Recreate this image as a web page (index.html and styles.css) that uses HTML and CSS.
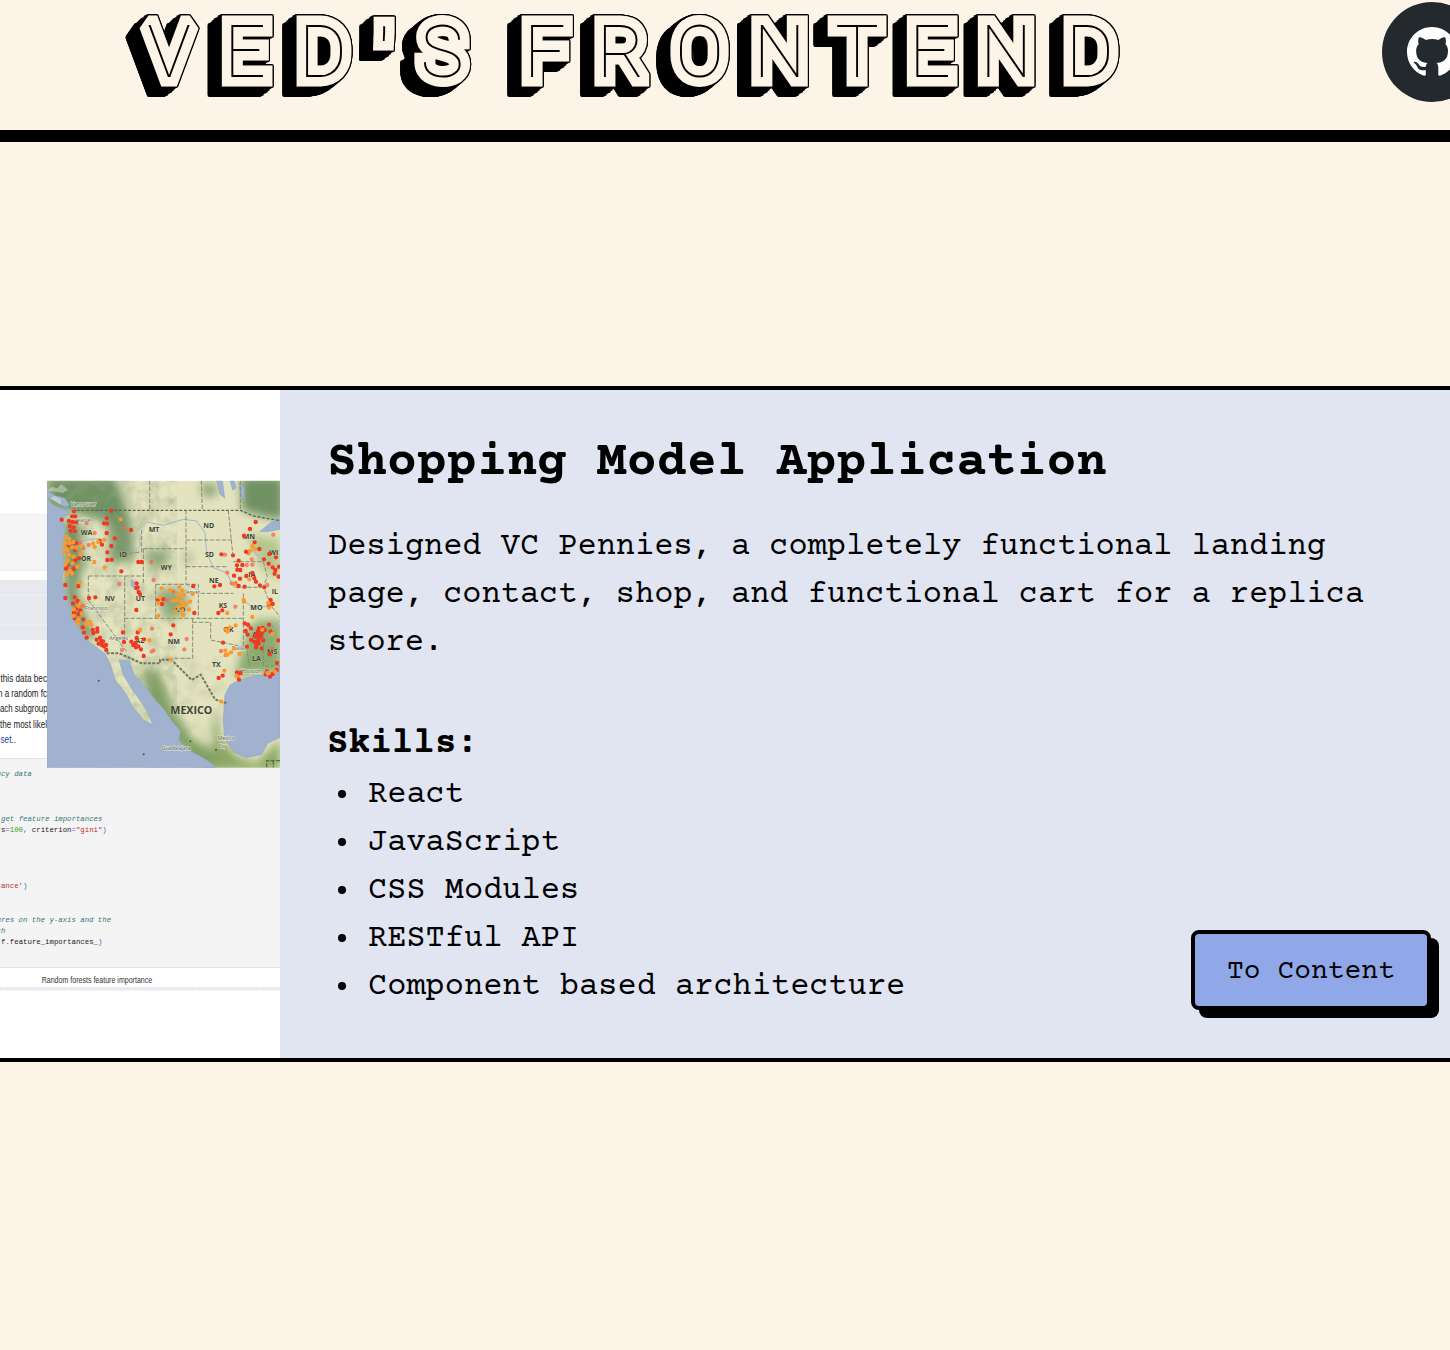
FILE: index.html
```html
<!DOCTYPE html>
<html lang="en">
<head>
<meta charset="utf-8">
<title>Ved's Frontend</title>
<link rel="stylesheet" href="styles.css">
</head>
<body>
<header class="header">
  <h1 class="brand"><svg viewBox="0 0 1382 130"><text y="77 77 77 80.500 77 77 77" x="169 245 323 384 442 490 545 621 699.500 779.500 857 930 1006 1090">VED'S FRONTEND</text></svg></h1>
  <a class="github" aria-label="GitHub"><svg viewBox="0 0 16 16"><path d="M8 0C3.58 0 0 3.58 0 8c0 3.54 2.29 6.53 5.47 7.59.4.07.55-.17.55-.38 0-.19-.01-.82-.01-1.49-2.01.37-2.53-.49-2.69-.94-.09-.23-.48-.94-.82-1.13-.28-.15-.68-.52-.01-.53.63-.01 1.08.58 1.23.82.72 1.21 1.87.87 2.33.66.07-.52.28-.87.51-1.07-1.78-.2-3.64-.89-3.64-3.95 0-.87.31-1.59.82-2.15-.08-.2-.36-1.02.08-2.12 0 0 .67-.21 2.2.82.64-.18 1.32-.27 2-.27s1.36.09 2 .27c1.53-1.04 2.2-.82 2.2-.82.44 1.1.16 1.92.08 2.12.51.56.82 1.27.82 2.15 0 3.07-1.87 3.75-3.65 3.95.29.25.54.73.54 1.48 0 1.07-.01 1.93-.01 2.2 0 .21.15.46.55.38A8.01 8.01 0 0 0 16 8c0-4.42-3.58-8-8-8z"/></svg></a>
</header>
<main>
<section class="project">
  <svg class="preview" viewBox="0 390 280 668">
    <defs>
      <clipPath id="map"><path d="M141 32H840V893H141z"/></clipPath>
      <filter id="soft" x="-30%" y="-30%" width="160%" height="160%"><feGaussianBlur stdDeviation="14"/></filter>
      <filter id="relief" x="0" y="0" width="100%" height="100%"><feTurbulence type="fractalNoise" baseFrequency=".025" numOctaves="4" seed="4"/><feColorMatrix values="0 0 0 0 .3  0 0 0 0 .38  0 0 0 0 .22  1.6 0 0 0 -.6"/></filter>
    </defs>
    <path d="M0 390H280V1058H0z" fill="#fff"/>
    <path d="M-1 514.500H48V570.500H-1z" fill="#f5f5f5" stroke="#e8e8e8" stroke-width=".7"/>
    <path d="M0 580H48V640H0z" fill="#e8e9ef"/><path d="M0 595H48M0 625H48" stroke="#f1f1f5"/>
    <path d="M-1 758.500H281V967.500H-1z" fill="#f4f4f4" stroke="#dedede" stroke-width=".8"/>
    <path d="M0 987H280V990.500H0z" fill="#eaeaf1"/>
    <path d="M3.500 987v4M68 987v4M132 987v4M197 987v4M261 987v4" stroke="#fff" stroke-width=".6"/>
    <g class="article">
      <text x="0.500" y="681.500" textLength="46.500" lengthAdjust="spacingAndGlyphs">this data bec</text><text x="-2" y="697" textLength="49" lengthAdjust="spacingAndGlyphs">n a random fc</text><text x="0" y="712.300" textLength="47.500" lengthAdjust="spacingAndGlyphs">ach subgroup</text><text x="0" y="727.500" textLength="47" lengthAdjust="spacingAndGlyphs">the most likel</text><text x="0.500" y="743" textLength="15.500" lengthAdjust="spacingAndGlyphs" class="link">set..</text>
    </g>
    <g class="code">
      <g class="comment"><text x="-3.500" y="776.200">ncy data</text><text x="1" y="821.200">get feature importances</text><text x="-3.500" y="921.500">ures on the y-axis and the</text><text x="-3.500" y="932.700">ch</text></g>
      <text x="-3.500" y="832.200">rs<tspan fill="#b32bff">=</tspan><tspan fill="#339b26">100</tspan><tspan fill="#315ec6">,</tspan> criterion<tspan fill="#b32bff">=</tspan><tspan fill="#bf3030">"gini"</tspan><tspan fill="#315ec6">)</tspan></text>
      <text x="-3.500" y="888.200" fill="#bf3030">tance'<tspan fill="#315ec6">)</tspan></text>
      <text x="1" y="944.200">f<tspan fill="#b32bff">.</tspan>feature_importances_<tspan fill="#315ec6">)</tspan></text>
    </g>
    <text class="caption" x="41.700" y="983" textLength="110.500" lengthAdjust="spacingAndGlyphs">Random forests feature importance</text>

    <g transform="translate(0 470) scale(.33333)" clip-path="url(#map)">
      <path d="M141 32H840V893H141z" fill="#e4e3bf"/>
      <g filter="url(#soft)" fill="#6f9263">
        <path d="M141 20H345L385 130 400 200 365 260 340 200 310 150 230 130 141 110z"/>
        <path d="M190 150l50 10 10 120-20 80 30 90 30 60-40-10-50-110z"/>
        <path d="M722 20H850V150L790 140 725 120z"/>
        <path d="M745 480l30-30 70 0v160h-60l-80 10z" fill="#8bab70"/>
        <path d="M740 190l100 20v120l-60-40z" fill="#b5c58b"/>
        <path d="M600 40h50v40h-40zM555 250h18v30h-18zM435 240h70v50h-50zM470 360h90v70l-60 20z" fill="#8ea777"/>
        <path d="M430 590l50 20 40 110 60 90 80 40 60 30v20H600l-80-90-80-110z" fill="#7fa060"/>
        <path d="M640 710l20 90 50 60 60 20 70-70v90H640z" fill="#8aa762"/>
        <path d="M330 130l70 70 0 70-70 10z" fill="#79976b"/>
      </g>
      <path d="M141 32H530V893H141z" filter="url(#relief)" opacity=".6"/>
      <path d="M400 560H680V893H400z" filter="url(#relief)" opacity=".3"/>
      <g fill="#a0b2cd" stroke="#8aa9c9" stroke-width="2">
        <path d="M141 90L165 108 195 120 210 118 207 132 188 142 194 190 188 250 193 285 184 335 203 383 214 430 238 475 260 510 315 552 332 585 345 630 380 675 398 710 430 750 458 764 448 735 424 696 399 662 370 615 358 570 388 573 402 614 438 652 470 695 490 715 517 755 541 782 536 812 570 842 620 870 650 893H141z"/>
        <path d="M840 592L805 614 760 618 720 630 690 645 675 675 670 750 674 805 700 845 740 863 785 853 803 820 840 802z"/>
        <path d="M141 62l25 15 28 7 14 20-10 8-26-14-31-18z"/>
        <path d="M840 148L815 156 780 184 800 185 840 178zM650 32l10 40 14 12-7-52zM690 32l8 28 10-6-6-22zM718 40l5 35 12 20-3-45zM394 330l12 8-2 20-10-12z"/>
      </g>
      <g fill="none" stroke="#9db5d5" stroke-width="3"><path d="M235 214l55-8 35 4M415 180l25-24 50 10 60-18 40 5 25 35 5 60 20 45 40 15 22 45M400 250l20-20 0-40M732 390l20 18 45 2M764 200l-10 40 40 35M560 345l35 15M805 500l35-50"/></g>
      <path d="M141 62l15-12 16 5 12-13 20 18-15 8zM150 85l15-8 18 11 0 17z" fill="#e5e8df" opacity=".45"/>
      <path d="M230 121H722L760 138 840 152" fill="none" stroke="#5c6651" stroke-width="4" stroke-dasharray="9 5"/>
      <path d="M449 32V121M604 32L607 121M721 32V121M558 121V343M558 210H695M685 121L698 250M430 236H558M430 236V343M558 290H680M265 318H430M265 318V390L380 545M374 318V520M467 343V445M467 343H595V370H700M595 370V445M373 445H730M578 445V565H514M578 457H632V510L730 530M730 370V530M700 275H790L802 320 790 350 815 410 840 440M706 352H790M740 530l8 60M790 520v68h50M425 180v65l-50 8" fill="none" stroke="#858d71" stroke-width="3" stroke-dasharray="13 5"/>
      <path d="M320 550H358L425 580H480V569H514L575 630 602 614 645 688 683 701" fill="none" stroke="#737865" stroke-width="6" stroke-dasharray="9 4"/>
      <path d="M840 872H800V893M820 872v20" fill="none" stroke="#56704a" stroke-width="4" stroke-dasharray="12 4"/>
      <g class="state"><text x="242" y="194">WA</text><text x="243" y="273">OR</text><text x="358" y="261">ID</text><text x="446" y="187">MT</text><text x="610" y="175">ND</text><text x="615" y="260">SD</text><text x="482" y="299">WY</text><text x="627" y="338">NE</text><text x="314" y="394">NV</text><text x="407" y="394">UT</text><text x="526" y="426">CO</text><text x="656" y="415">KS</text><text x="751" y="419">MO</text><text x="728" y="206">MN</text><text x="808" y="254">WI</text><text x="745" y="322">IA</text><text x="815" y="373">IL</text><text x="503" y="521">NM</text><text x="406" y="518">AZ</text><text x="670" y="487">OK</text><text x="757" y="500">AR</text><text x="636" y="592">TX</text><text x="756" y="572">LA</text><text x="801" y="553">MS</text><text x="511" y="733" class="country" textLength="126" lengthAdjust="spacingAndGlyphs">MEXICO</text></g>
      <g class="city"><text x="212" y="108">Vancouver</text><text x="231" y="156">eattle</text><text x="255" y="421">Francisco</text><text x="328" y="510">Angeles</text><text x="549" y="371">Denver</text><text x="696" y="541">Dallas</text><text x="722" y="610">Houston</text><text x="485" y="839">Guadalajara</text><text x="653" y="810">Mexico</text><text x="653" y="835">City</text></g>
      <g class="heat pale"><path d="M260 160h0M284 189h0M373 174h0M240 218h0M250 234h0M266 225h0M358 342h0M461 330h0M454 276h0M250 408h0M366 540h0M455 545h0M460 541h0M560 507h0M553 538h0M456 476h0M706 410h0M682 308h0M695 340h0M675 254h0M745 250h0M755 268h0M757 284h0M740 285h0M820 194h0M802 345h0M663 543h0M677 555h0M816 535h0M748 470h0M499 390h0M520 365h0"/></g>
      <g class="heat red">
        <path d="M222 124h0M216 139h0M226 139h0M207 153h0M218 156h0M229 157h0M209 168h0M221 172h0M212 182h0M225 184h0M185 149h0M334 122h0M320 145h0M312 160h0M321 161h0M320 189h0M344 205h0M299 213h0M306 224h0M322 247h0M334 228h0M335 269h0M322 270h0M364 304h0M228 219h0M207 226h0M225 241h0M226 271h0M237 265h0M203 286h0M198 296h0M222 296h0M196 345h0M235 348h0M196 384h0M267 384h0M286 382h0M224 382h0M233 393h0M219 401h0M237 406h0M228 416h0M241 421h0M222 428h0M235 432h0M250 448h0M248 472h0M234 458h0M224 445h0"/>
        <path d="M252 488h0M260 503h0M278 480h0M292 475h0M280 489h0M292 485h0M290 509h0M300 503h0M309 514h0M296 521h0M313 529h0M319 540h0M306 525h0M372 516h0M394 515h0M407 519h0M415 529h0M423 538h0M431 558h0M369 487h0M413 487h0M432 508h0M410 504h0M400 525h0M408 532h0M304 513h0M318 525h0M512 493h0M520 466h0M410 340h0M413 352h0M416 366h0M409 354h0M420 373h0M409 420h0M415 276h0M425 276h0M393 180h0M473 391h0M486 402h0M489 387h0M580 348h0M583 429h0M655 429h0M667 421h0M643 349h0M660 345h0M664 253h0M699 256h0"/>
        <path d="M767 156h0M750 177h0M732 197h0M764 217h0M738 245h0M716 272h0M727 285h0M711 286h0M721 300h0M712 299h0M702 317h0M720 326h0M706 340h0M716 348h0M734 350h0M739 318h0M757 309h0M763 325h0M768 335h0M780 346h0M793 352h0M778 237h0M792 268h0M808 252h0M828 262h0M806 281h0M818 292h0M826 300h0M824 311h0M836 320h0M837 290h0M812 390h0M806 408h0M818 402h0M734 460h0M744 464h0M753 475h0M777 475h0M788 474h0M807 464h0M737 483h0M743 494h0M754 510h0M774 484h0M786 488h0M766 500h0M778 502h0M790 511h0M764 516h0M776 519h0M741 530h0M768 532h0M785 535h0M772 492h0M784 499h0M770 525h0M775 510h0M794 480h0M812 485h0M835 511h0M669 518h0M656 624h0M668 617h0M711 607h0M722 609h0M712 618h0M717 629h0M801 604h0M797 613h0M818 612h0M810 620h0M831 579h0M830 600h0M809 553h0"/>
      </g>
      <g class="heat orange"><path d="M199 201h0M208 207h0M195 217h0M208 220h0M220 216h0M194 230h0M203 240h0M216 232h0M229 233h0M192 249h0M207 255h0M220 260h0M242 252h0M204 271h0M197 283h0M218 280h0M232 290h0M209 303h0M200 314h0M216 310h0M243 228h0M279 220h0M284 231h0M295 216h0M313 210h0M283 276h0M314 292h0M362 148h0M239 337h0M235 408h0M222 418h0M245 430h0M220 438h0M234 450h0M241 400h0M234 460h0M259 462h0M270 455h0M274 464h0M448 511h0M420 480h0M485 355h0M510 360h0M538 351h0M547 362h0M532 374h0M542 380h0M552 374h0M530 390h0M544 395h0M519 392h0M548 407h0M535 410h0M527 425h0M546 423h0M558 402h0M570 395h0M578 372h0M567 418h0M550 435h0M475 437h0M481 382h0M475 399h0M513 568h0M678 479h0M707 466h0M689 472h0M683 485h0M676 542h0M682 554h0M693 547h0M702 536h0M719 552h0M757 228h0M751 242h0M765 238h0M748 328h0M731 390h0M732 395h0M704 342h0M682 429h0M757 441h0M805 399h0M807 413h0M818 492h0M673 602h0M663 694h0M710 618h0M803 609h0M825 605h0M787 479h0"/></g>
      <path d="M571 814h0M648 840h0M296 632h0M431 853h0" stroke="#4c5543" stroke-width="6" stroke-linecap="round"/>
    </g>
  </svg>
  <div class="details">
    <h2 class="title">Shopping Model Application</h2>
    <p class="description">Designed VC Pennies, a completely functional landing page, contact, shop, and functional cart for a replica store.</p>
    <h3 class="skills-title">Skills:</h3>
    <ul class="skills"><li>React</li><li>JavaScript</li><li>CSS Modules</li><li>RESTful API</li><li>Component based architecture</li></ul>
    <a class="button">To Content</a>
  </div>
</section>
</main>
</body>
</html>
```
FILE: styles.css
```css
* { box-sizing: border-box; }
body { margin: 0; height: 1350px; overflow: hidden; background: #fdf4e8; color: #000; font-family: "Courier Prime", "Courier 10 Pitch", "Nimbus Mono PS", FreeMono, "Liberation Mono", monospace; }
.header { display: flex; height: 142px; border-bottom: 12px solid #000; overflow: hidden; }
.brand {
  flex: none; width: 1382px; height: 130px; margin: 0;
  /* outline first, then doubling offsets that join into one solid extrusion */
  filter: drop-shadow(1px 0 #000) drop-shadow(-1px 0 #000) drop-shadow(0 1px #000) drop-shadow(0 -1px #000)
    drop-shadow(-1px .86px #000) drop-shadow(-2px 1.7px #000) drop-shadow(-4px 3.4px #000) drop-shadow(-6px 5.1px #000);
}
.brand svg { display: block; width: 1382px; height: 130px; }
.brand text { font: 100 73px Roboto, sans-serif; text-anchor: middle; paint-order: stroke fill; fill: #000; stroke: #fdf4e8; stroke-width: 19px; stroke-linejoin: miter; stroke-miterlimit: 1.6; }
.github { flex: none; display: flex; align-items: center; justify-content: center; width: 100px; height: 100px; margin-top: 2px; border-radius: 50%; background: #24292e; }
.github svg { width: 50px; height: 50px; fill: #fff; }

.project { display: flex; margin-top: 244px; height: 676px; border-top: 4px solid #000; border-bottom: 4px solid #000; background: #e1e5f1; }
.preview { flex: none; width: 280px; height: 668px; }
.article { font: 11px "Liberation Sans", sans-serif; fill: #222; }
.link { fill: #2440a4; }
.code { font: 7.350px "Liberation Mono", monospace; fill: #222; white-space: pre; }
.comment { font-style: italic; fill: #37797a; }
.caption { font: 9.500px "Liberation Sans", sans-serif; fill: #333; }
.heat { fill: none; stroke-linecap: round; stroke-width: 13; }
.red { stroke: #f03822; }
.pale { stroke: #f4674c; opacity: .75; }
.orange { stroke: #fb9a2c; }
.state { font: 700 21px "Open Sans", sans-serif; fill: #3d4437; paint-order: stroke; stroke: #f1efd580; stroke-width: 2px; }
.country { font-size: 30px; font-weight: 700; }
.city { font: 16px "Open Sans", sans-serif; letter-spacing: -.3px; fill: #626b5d; paint-order: stroke; stroke: #f1f1e3a0; stroke-width: 4px; }

.details { flex: 1; min-width: 0; display: flex; flex-direction: column; padding: 43px 19px 0 48px; }
.title { margin: 0 0 0 -1px; font-size: 50px; line-height: 60px; white-space: nowrap; }
.description { margin: 30px 0 0; font-size: 32px; line-height: 48px; padding-right: 10px; }
.skills-title { margin: 53px 0 0 -1px; font-size: 36px; line-height: 48px; }
.skills { list-style: none; margin: 3px 0 0; padding: 0 0 0 10px; font-size: 32px; line-height: 48px; }
.skills li { display: flex; align-items: center; gap: 22px; }
.skills li::before { content: ""; width: 8px; height: 8px; margin-bottom: 3px; border-radius: 50%; background: #000; }
.button { align-self: flex-end; display: flex; align-items: center; justify-content: center; width: 240px; height: 80px; margin-top: -81px; padding-top: 4px; border: 4px solid #000; border-radius: 8px; background: #90a8e8; box-shadow: 8px 8px #000; font-size: 28px; }
```
